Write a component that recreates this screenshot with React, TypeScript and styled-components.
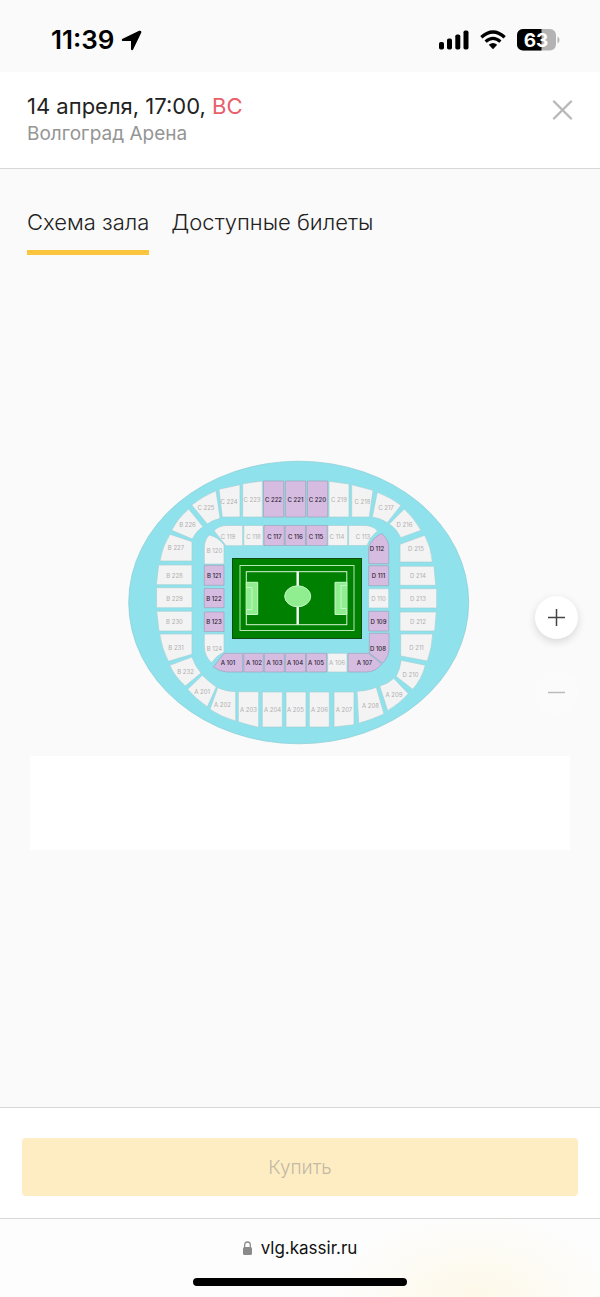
import React from 'react';
import styled, { createGlobalStyle } from 'styled-components';

const GlobalStyle = createGlobalStyle`
  * { box-sizing: border-box; }
  html, body, #root { height: 100%; }
  body {
    margin: 0;
    background: #fafafa;
    color: #222;
    font-family: Inter, 'Liberation Sans', sans-serif;
  }
  button { font: inherit; border: 0; padding: 0; cursor: pointer; }
`;

const Page = styled.div`
  display: flex;
  flex-direction: column;
  min-height: 100%;
`;

const StatusBar = styled.div`
  display: flex;
  align-items: center;
  justify-content: space-between;
  height: 72px;
  padding: 8px 40px 0 51px;
  color: #000;
`;

const Clock = styled.div`
  display: flex;
  align-items: center;
  gap: 7px;
  font-size: 26px;
  line-height: 32px;
  font-weight: 600;
`;

const StatusIcons = styled.div`
  display: flex;
  align-items: center;
  gap: 11px;
`;

const Header = styled.header`
  display: flex;
  align-items: flex-start;
  justify-content: space-between;
  height: 97px;
  padding: 20px 27px 0;
  background: #fff;
  border-bottom: 1px solid #d8d8d8;
`;

const EventDate = styled.h1`
  margin: 0;
  font-size: 22px;
  line-height: 28px;
  font-weight: 400;
`;

const Weekday = styled.span`
  color: #e8606a;
`;

const Venue = styled.p`
  margin: 0;
  color: #959595;
  font-size: 19px;
  line-height: 27px;
  font-weight: 400;
`;

const CloseButton = styled.button`
  display: flex;
  margin-top: 8px;
  background: none;
`;

const Tabs = styled.nav`
  display: flex;
  gap: 22px;
  padding: 36px 27px 0;
`;

const Tab = styled.button<{ $active?: boolean }>`
  height: 50px;
  padding-bottom: 11px;
  background: none;
  color: #222;
  font-size: 22px;
  font-weight: 350;
  line-height: 34px;
  border-bottom: 5px solid ${(p) => (p.$active ? '#fbc63e' : 'transparent')};
`;

const Main = styled.main`
  position: relative;
  flex: 1;
  display: flex;
  flex-direction: column;
  align-items: center;
  padding: 205px 30px 0;
`;

const Hall = styled.svg`
  display: block;
  width: 57vw;
  height: auto;
  margin-right: 2px;
`;

const Legend = styled.div`
  align-self: stretch;
  height: 94px;
  margin-top: 11px;
  background: #fff;
`;

const ZoomControls = styled.div`
  position: absolute;
  top: 341px;
  right: 22px;
  display: flex;
  flex-direction: column;
  gap: 32px;
`;

const ZoomButton = styled.button`
  display: flex;
  align-items: center;
  justify-content: center;
  width: 43px;
  height: 43px;
  border-radius: 50%;
  background: #fff;
  color: #444;
  box-shadow: 0 3px 8px rgba(0, 0, 0, 0.14);

  &:disabled {
    background: #fbfbfb;
    color: #bbb;
    box-shadow: none;
  }
`;

const BuyPanel = styled.footer`
  padding: 30px 22px 22px;
  background: #fff;
  border-top: 1px solid #d8d8d8;
`;

const BuyButton = styled.button`
  display: block;
  width: 100%;
  height: 58px;
  border-radius: 4px;
  background: #feedc3;
  color: #c3b9a6;
  font-size: 19px;
  font-weight: 350;
`;

const BrowserBar = styled.div`
  display: flex;
  flex-direction: column;
  align-items: center;
  justify-content: space-between;
  height: 79px;
  padding: 17px 0 11px;
  border-top: 1px solid #d8d8d8;
  background: radial-gradient(ellipse 140px 80px at 79% 100%, #fdf8e8, transparent), #fdfdfd;
`;

const Address = styled.div`
  display: flex;
  align-items: center;
  gap: 9px;
  color: #111;
  font-size: 17px;
  line-height: 24px;
`;

const HomeIndicator = styled.div`
  width: 214px;
  height: 8px;
  border-radius: 4px;
  background: #000;
`;

type Sector = { name: string; d: string; x: number; y: number; free?: boolean };

const box = (x1: number, y1: number, x2: number, y2: number) => `M${x1} ${y1}H${x2}V${y2}H${x1}Z`;

const sectors: Sector[] = [
  { name: 'C 225', d: 'M191.7 505Q203 496 216 490.7L220 518.3Q213 520 207.3 524Z', x: 206, y: 508.5 },
  { name: 'C 224', d: 'M219 489.3L240 484.7V517H222.3Z', x: 229, y: 502 },
  { name: 'C 223', d: 'M242.7 483.7L262.3 481V517H242.7Z', x: 252, y: 500 },
  { name: 'C 222', d: box(263.5, 481, 283.7, 517), x: 273.5, y: 500, free: true },
  { name: 'C 221', d: box(285.3, 481, 305.7, 517), x: 295.5, y: 500, free: true },
  { name: 'C 220', d: box(307.3, 481, 327.7, 517), x: 317.5, y: 500, free: true },
  { name: 'C 219', d: 'M329 481.3L349 484V517H329Z', x: 339, y: 500 },
  { name: 'C 218', d: 'M351.7 484.7L373 490.3L369.3 517H351.7Z', x: 362.5, y: 502 },
  { name: 'C 217', d: 'M377.3 492.3Q390 497 401 505.3L387.3 522.7Q380 518 372.3 517Z', x: 386, y: 508.5 },
  { name: 'D 216', d: 'M404.3 509Q414 518 421 530.3L400.7 537.7Q397 529 389.3 524Z', x: 404.5, y: 525 },
  { name: 'D 215', d: 'M424.7 535.3Q431.5 548 432.3 562H400V544.3Z', x: 416, y: 549.5 },
  { name: 'D 214', d: 'M400 566.3H434L435.7 585.3H400Z', x: 418, y: 576.5 },
  { name: 'D 213', d: box(400, 588.7, 436.7, 608), x: 418, y: 599.5 },
  { name: 'D 212', d: 'M400 612H436.3L434.7 631H400Z', x: 418, y: 622 },
  { name: 'D 211', d: 'M400.7 634H432.7Q432 648 427.3 661L400.7 656Z', x: 416.5, y: 648.5 },
  { name: 'D 210', d: 'M401 660.3L425.3 665.3Q422 679 412.7 689.3L396 676.3Q400 670 401 660.3Z', x: 410.5, y: 675.5 },
  { name: 'A 209', d: 'M393.7 678.3L408.3 693.7Q399 704 387.7 710.7L379.7 686Q388 684 393.7 678.3Z', x: 394, y: 695.5 },
  { name: 'A 208', d: 'M357 691.3Q368 691 376.3 687.3L384 714Q371 720 358.7 723.3Z', x: 370.5, y: 706.5 },
  { name: 'A 207', d: 'M334 692H354V724.7L334 727Z', x: 344, y: 710 },
  { name: 'A 206', d: box(309.3, 692, 329.3, 727), x: 319.5, y: 710 },
  { name: 'A 205', d: box(286, 692, 306, 727), x: 295.5, y: 710 },
  { name: 'A 204', d: box(262.3, 692, 282.3, 727), x: 272.5, y: 710 },
  { name: 'A 203', d: 'M238.3 691.7H258.7V727.3Q248 725 238.3 721.7Z', x: 248.5, y: 710 },
  { name: 'A 202', d: 'M217.7 687.7Q226 691.5 235.7 691.7V721Q221 717 210 709.3Z', x: 222.5, y: 705.5 },
  { name: 'A 201', d: 'M202.3 675.3Q209 682 216.3 687L207.3 706.7Q196 699 187.7 689.3Z', x: 202, y: 692 },
  { name: 'B 232', d: 'M192 657Q195 666 201 673L185.3 686Q175 677 169.7 665.3Z', x: 185.5, y: 672.5 },
  { name: 'B 231', d: 'M159.7 634H192V654.3L168.3 661.3Q162 649 159.7 634Z', x: 176, y: 648.5 },
  { name: 'B 230', d: 'M156.7 611.3H192V631H159Z', x: 174.5, y: 622 },
  { name: 'B 229', d: box(156.5, 587.7, 192, 607.7), x: 174.5, y: 599 },
  { name: 'B 228', d: 'M158.7 565H192V584.7H156.3Z', x: 174.5, y: 576 },
  { name: 'B 227', d: 'M170 534.3L192 541.7V561H160Q162 547 170 534.3Z', x: 176, y: 548.5 },
  { name: 'B 226', d: 'M188.7 509L203 526.7Q196 531 192.3 539L171.7 530.3Q178 518 188.7 509Z', x: 187.5, y: 525 },
  { name: 'C 119', d: 'M214 530.7Q219 525.5 227 525.5H242.7V545.7H226Z', x: 228, y: 537 },
  { name: 'C 118', d: box(243.8, 525.5, 263, 545.5), x: 253.5, y: 537 },
  { name: 'C 117', d: box(264, 525.5, 284.3, 545.5), x: 274.5, y: 537, free: true },
  { name: 'C 116', d: box(285.2, 525.5, 305.5, 545.5), x: 295.5, y: 537, free: true },
  { name: 'C 115', d: box(306.3, 525.5, 327.3, 545.5), x: 316, y: 537, free: true },
  { name: 'C 114', d: box(328, 525.5, 347.7, 545.5), x: 337, y: 537 },
  { name: 'C 113', d: 'M348.6 525.5H364Q373 525.5 377.5 531Q370 537 367 545.5H348.6Z', x: 363, y: 537 },
  { name: 'D 112', d: 'M368.7 547Q373 537 382 533.5Q388.7 540 388.7 547V563.7H368.7Z', x: 377, y: 549.5, free: true },
  { name: 'D 111', d: box(368.7, 565.7, 388.7, 585.7), x: 378.5, y: 576.5, free: true },
  { name: 'D 110', d: box(368.7, 588.7, 388.7, 608), x: 378.5, y: 599.5 },
  { name: 'D 109', d: box(368.7, 611.3, 388.7, 631), x: 378.5, y: 622, free: true },
  { name: 'D 108', d: 'M369.3 633.3H389V650Q388 658 382.7 663.3L369.3 653Z', x: 378, y: 649.5, free: true },
  { name: 'A 107', d: 'M348 653.3H368.3L381.7 664Q376 672 366 672H348Z', x: 364.5, y: 663.5, free: true },
  { name: 'A 106', d: box(327.7, 653.3, 347, 672), x: 337, y: 663.5 },
  { name: 'A 105', d: box(306.5, 653.3, 326.7, 672), x: 316, y: 663.5, free: true },
  { name: 'A 104', d: box(285.3, 653.3, 305.5, 672), x: 295, y: 663.5, free: true },
  { name: 'A 103', d: box(264.3, 653.3, 284.3, 672), x: 274.5, y: 663.5, free: true },
  { name: 'A 102', d: box(243.8, 653.3, 263.3, 672), x: 254, y: 663.5, free: true },
  { name: 'A 101', d: 'M224 653.3H242.7V672H227Q219 671.5 213.5 667Z', x: 228, y: 663.5, free: true },
  { name: 'B 124', d: 'M204.3 634H224V652Q217 655 211.5 662.7Q204.3 656 204.3 646Z', x: 214.5, y: 649.5 },
  { name: 'B 123', d: box(204.3, 612, 224, 631.5), x: 214, y: 622.5, free: true },
  { name: 'B 122', d: box(204.3, 588.5, 224, 607.7), x: 214, y: 599.5, free: true },
  { name: 'B 121', d: box(204.3, 565.3, 224, 585.3), x: 214, y: 576.5, free: true },
  { name: 'B 120', d: 'M204.3 548Q204.3 540 209.3 535Q218 537 224 545V564H204.3Z', x: 214.5, y: 551 },
];

const Shape = styled.path<{ $free?: boolean }>`
  fill: ${(p) => (p.$free ? '#d5bce0' : '#f3f3f3')};
  stroke: ${(p) => (p.$free ? '#9a9cb4' : '#a3cdd4')};
  stroke-width: 0.6;
`;

const SectorName = styled.text<{ $free?: boolean }>`
  fill: ${(p) => (p.$free ? '#2d2433' : '#b0b0b0')};
  font-size: 6px;
  font-weight: ${(p) => (p.$free ? 500 : 400)};
  text-anchor: middle;
  dominant-baseline: middle;
`;

function Pitch() {
  return (
    <g>
      <rect x="232.5" y="558.5" width="129" height="80" fill="#008000" stroke="#124a12" />
      <g fill="none" stroke="#b5e8b5" strokeWidth="1">
        <rect x="240" y="565.5" width="114" height="65" />
        <rect x="246.300" y="571.700" width="100.500" height="53" stroke="#d8f6d8" />
      </g>
      <path d="M297.7 571.5V624.5" stroke="#fff" strokeWidth="2.400" />
      <ellipse cx="297.7" cy="596.300" rx="13" ry="10.500" fill="#90ee90" stroke="#c5f7c5" />
      <g fill="#90ee90" stroke="#c5f7c5">
        <path d="M246.300 582.300H257.700V614.500H246.300ZM346.800 582.300H335V614.500H346.800Z" />
        <path d="M246.300 587.500H252V609.500H246.300M346.800 585.500H341V608.500H346.800" />
      </g>
    </g>
  );
}

export default function App() {
  return (
    <>
      <GlobalStyle />
      <Page>
        <StatusBar>
          <Clock>
            <span>11:39</span>
            <svg width="21" height="21" viewBox="0 0 21 21">
              <path
                d="M2 9.500L18.500 1.500Q19.800 1.200 19.500 2.500L11.500 19Q11 19.800 10.800 19V11Q10.800 10.300 10 10.300H2Q1.200 10 2 9.500Z"
                stroke="#000"
                strokeWidth="1.600"
                strokeLinejoin="round"
              />
            </svg>
          </Clock>
          <StatusIcons>
            <svg width="31" height="20" viewBox="0 0 31 20">
              <rect x="1" y="12" width="5" height="7.500" rx="1.800" />
              <rect x="9" y="8.500" width="5" height="11" rx="1.800" />
              <rect x="17.300" y="4.500" width="5" height="15" rx="1.800" />
              <rect x="25.500" y="0.500" width="5" height="19" rx="1.800" />
            </svg>
            <svg width="26" height="20" viewBox="0 0 26 20">
              <g fill="none" stroke="#000" strokeWidth="3.200">
                <path d="M1.300 7.200Q13 -3.200 24.700 7.200" />
                <path d="M5.600 11.600Q13 5 20.400 11.600" />
              </g>
              <path d="M8.800 14.800Q13 11.400 17.200 14.800L13 19.200Z" />
            </svg>
            <svg width="43" height="22" viewBox="0 0 43 22">
              <defs>
                <clipPath id="battery"><rect width="39" height="21.500" rx="6" /></clipPath>
              </defs>
              <g clipPath="url(#battery)">
                <rect width="39" height="22" fill="#b3b3b3" />
                <rect width="24.500" height="22" />
              </g>
              <path d="M40.500 7.500Q42.500 8.500 42.500 11T40.500 14.500Z" fill="#b3b3b3" />
              <text x="19" y="17.500" textAnchor="middle" fontSize="19" fontWeight="700" fill="#fff">63</text>
            </svg>
          </StatusIcons>
        </StatusBar>

        <Header>
          <div>
            <EventDate>14 апреля, 17:00, <Weekday>ВС</Weekday></EventDate>
            <Venue>Волгоград Арена</Venue>
          </div>
          <CloseButton aria-label="Закрыть">
            <svg width="21" height="20" viewBox="0 0 21 20" stroke="#b8b8b8" strokeWidth="2.400" strokeLinecap="round">
              <path d="M2 1.500L19 18.500M19 1.500L2 18.500" />
            </svg>
          </CloseButton>
        </Header>

        <Tabs>
          <Tab $active>Схема зала</Tab>
          <Tab>Доступные билеты</Tab>
        </Tabs>

        <Main>
          <Hall viewBox="128 460 342 285" role="img" aria-label="Схема зала">
            <ellipse cx="298.700" cy="602.500" rx="170" ry="141.300" fill="#8fe2ec" stroke="#86cbd5" strokeWidth=".7" />
            {sectors.map((s) => (
              <g key={s.name}>
                <Shape d={s.d} $free={s.free} />
                <SectorName x={s.x} y={s.y} $free={s.free}>{s.name}</SectorName>
              </g>
            ))}
            <Pitch />
          </Hall>
          <Legend />
          <ZoomControls>
            <ZoomButton aria-label="Увеличить">
              <svg width="17" height="17" viewBox="0 0 17 17" stroke="currentColor" strokeWidth="1.500">
                <path d="M0 8.500H17M8.500 0V17" />
              </svg>
            </ZoomButton>
            <ZoomButton aria-label="Уменьшить" disabled>
              <svg width="17" height="17" viewBox="0 0 17 17" stroke="currentColor" strokeWidth="1.500">
                <path d="M0 8.500H17" />
              </svg>
            </ZoomButton>
          </ZoomControls>
        </Main>

        <BuyPanel>
          <BuyButton disabled>Купить</BuyButton>
        </BuyPanel>
        <BrowserBar>
          <Address>
            <svg width="9" height="14" viewBox="0 0 9 14">
              <rect y="6" width="9" height="8" rx="1.500" fill="#8a8a8a" />
              <path d="M1.700 7V4Q1.700 1 4.500 1T7.300 4V7" fill="none" stroke="#8a8a8a" strokeWidth="1.300" />
            </svg>
            <span>vlg.kassir.ru</span>
          </Address>
          <HomeIndicator />
        </BrowserBar>
      </Page>
    </>
  );
}
